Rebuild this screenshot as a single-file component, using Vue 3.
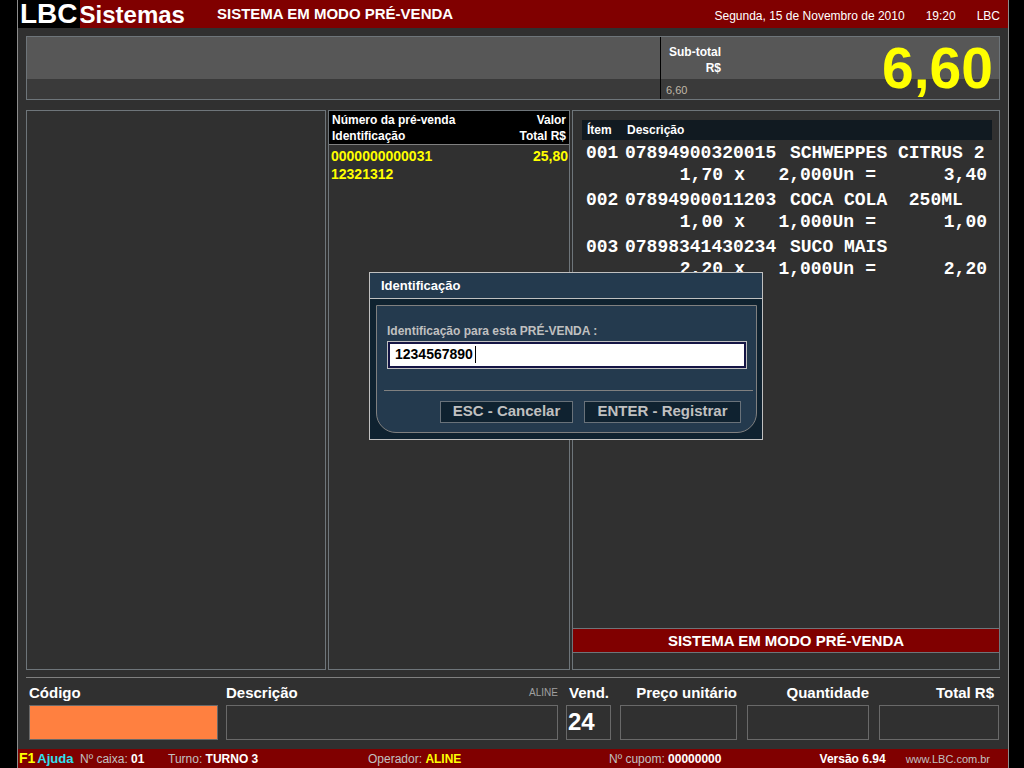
<script setup>
import { ref } from 'vue'

const identification = ref('1234567890')
const seller = ref('24')

const items = [
  { n: '001', code: '07894900320015', name: 'SCHWEPPES CITRUS 2', price: '1,70', qty: '2,000Un', total: '3,40' },
  { n: '002', code: '07894900011203', name: 'COCA COLA  250ML', price: '1,00', qty: '1,000Un', total: '1,00' },
  { n: '003', code: '07898341430234', name: 'SUCO MAIS', price: '2,20', qty: '1,000Un', total: '2,20' },
]
</script>

<template>
  <div class="screen">
    <div class="app">
      <header class="top">
        <div class="brand"><span class="brand-a">LBC</span><span class="brand-b">Sistemas</span></div>
        <h1 class="mode">SISTEMA EM MODO PRÉ-VENDA</h1>
        <div class="when">
          <span>Segunda, 15 de Novembro de 2010</span>
          <span>19:20</span>
          <span>LBC</span>
        </div>
      </header>

      <main class="body">
        <section class="summary">
          <div class="summary-main"></div>
          <div class="summary-total">
            <div class="sub-labels">
              <div class="sub-name">Sub-total<br />R$</div>
              <div class="sub-small">6,60</div>
            </div>
            <div class="sub-value">6,60</div>
          </div>
        </section>

        <section class="work">
          <div class="panel blank"></div>

          <div class="panel">
            <table class="presales">
              <thead>
                <tr>
                  <th>Número da pré-venda<br />Identificação</th>
                  <th class="num">Valor<br />Total R$</th>
                </tr>
              </thead>
              <tbody>
                <tr>
                  <td>0000000000031<br />12321312</td>
                  <td class="num">25,80</td>
                </tr>
              </tbody>
            </table>
          </div>

          <div class="panel coupon">
            <table class="items">
              <thead>
                <tr><th class="c-n">Ítem</th><th>Descrição</th></tr>
              </thead>
              <tbody>
                <tr v-for="it in items" :key="it.n">
                  <td>{{ it.n }}</td>
                  <td>
                    <div class="line"><span class="code">{{ it.code }}</span><span>{{ it.name }}</span></div>
                    <div class="line calc">
                      <span class="price">{{ it.price }}</span><span class="times">x</span>
                      <span class="qty">{{ it.qty }}</span><span class="eq">=</span>
                      <span class="total">{{ it.total }}</span>
                    </div>
                  </td>
                </tr>
              </tbody>
            </table>
            <div class="banner">SISTEMA EM MODO PRÉ-VENDA</div>
          </div>

          <form class="dialog" role="dialog" aria-labelledby="dlg-title" @submit.prevent>
            <h2 id="dlg-title" class="dialog-title">Identificação</h2>
            <div class="dialog-frame">
              <div class="dialog-body">
                <label for="ident" class="dialog-label">Identificação para esta PRÉ-VENDA :</label>
                <div class="entry">
                  <input id="ident" v-model="identification" type="text" />
                  <span class="caret"></span>
                </div>
                <div class="actions">
                  <button type="button">ESC - Cancelar</button>
                  <button type="submit" class="wide">ENTER - Registrar</button>
                </div>
              </div>
            </div>
          </form>
        </section>

        <section class="fields">
          <div class="group left">
            <div class="field">
              <label for="codigo">Código</label>
              <input id="codigo" class="active" type="text" />
            </div>
            <div class="field">
              <div class="label-row"><label for="descricao">Descrição</label><span class="who">ALINE</span></div>
              <input id="descricao" type="text" />
            </div>
            <div class="field vend">
              <label for="vend">Vend.</label>
              <input id="vend" v-model="seller" type="text" />
            </div>
          </div>
          <div class="group right">
            <div class="field"><label for="preco">Preço unitário</label><input id="preco" type="text" /></div>
            <div class="field"><label for="quant">Quantidade</label><input id="quant" type="text" /></div>
            <div class="field last"><label for="total">Total R$</label><input id="total" type="text" /></div>
          </div>
        </section>
      </main>

      <footer class="status">
        <div class="cell help"><b class="f1">F1</b><b class="ajuda">Ajuda</b></div>
        <div class="cell box">Nº caixa: <b>01</b></div>
        <div class="cell shift">Turno: <b>TURNO 3</b></div>
        <div class="cell oper">Operador: <b class="yellow">ALINE</b></div>
        <div class="cell receipt">Nº cupom: <b>00000000</b></div>
        <div class="cell version"><b>Versão 6.94</b></div>
        <a class="site" href="#">www.LBC.com.br</a>
      </footer>
    </div>
  </div>
</template>

<style>
body {
  background: #000;
}
</style>

<style scoped>
* {
  box-sizing: border-box;
}
.screen {
  min-height: 100vh;
  display: flex;
  padding: 0 15px 0 17px;
  background: #000;
  color: #fff;
  font-family: "Liberation Sans", Arial, sans-serif;
  font-size: 12px;
  line-height: 16px;
}
.app {
  flex: 1;
  display: flex;
  flex-direction: column;
  min-width: 0;
  background: #303030;
  border: solid #8c8c8c;
  border-width: 0 1px;
}
.top {
  display: flex;
  align-items: center;
  height: 28px;
  background: #800000;
  padding-right: 8px;
}
.brand {
  display: flex;
  align-items: center;
  width: 199px;
  font-weight: bold;
}
.brand-a {
  background: #000;
  font-size: 28px;
  line-height: 28px;
  padding: 0 2px;
}
.brand-b {
  font-size: 24px;
  line-height: 28px;
  padding-top: 1px;
}
.mode {
  margin: 0;
  font-size: 15px;
  line-height: 28px;
}
.when {
  display: flex;
  gap: 21px;
  margin-left: auto;
  font-size: 12px;
  line-height: 16px;
  padding-top: 3px;
}
.body {
  flex: 1;
  display: flex;
  flex-direction: column;
  padding: 8px 8px 9px;
}
.summary {
  display: flex;
  height: 64px;
  border: 1px solid #6e757a;
  background: linear-gradient(#575757 42px, #3a3a3a 42px);
}
.summary-main {
  flex: 1;
}
.summary-total {
  display: flex;
  justify-content: space-between;
  width: 339px;
  border-left: 1px solid #000;
  padding: 0 6px 0 5px;
}
.sub-labels {
  display: flex;
  flex-direction: column;
  justify-content: space-between;
  padding: 7px 0 1px;
}
.sub-name {
  padding-left: 3px;
  text-align: right;
  font-weight: bold;
}
.sub-small {
  color: #c0b8a8;
  font-size: 11px;
}
.sub-value {
  color: #ff0;
  font-size: 57px;
  font-weight: bold;
  line-height: 62px;
}
.work {
  position: relative;
  flex: 1;
  display: grid;
  grid-template-columns: 300fr 242px 428fr;
  gap: 2px;
  margin-top: 10px;
}
.panel {
  border: 1px solid #6e757a;
}
.presales {
  width: 100%;
  border-collapse: collapse;
}
.presales th {
  background: #000;
  border-bottom: 1px solid #808080;
  padding: 1px 3px 0;
  text-align: left;
  font-size: 12px;
  line-height: 16px;
}
.presales td {
  padding: 2px 1px 0 2px;
  color: #ff0;
  font-size: 14px;
  font-weight: bold;
  line-height: 18px;
  vertical-align: top;
}
.presales .num {
  text-align: right;
}
.coupon {
  display: flex;
  flex-direction: column;
  padding: 9px 0 16px;
}
.items {
  margin: 0 7px 0 9px;
  border-collapse: collapse;
}
.items th {
  background: #111a21;
  padding: 2px 0 2px 5px;
  text-align: left;
  font-size: 12px;
  line-height: 16px;
}
.items .c-n {
  width: 40px;
}
.items td {
  padding: 2px 5px 1px 3px;
  font: bold 18px/22px "Liberation Mono", "Courier New", monospace;
  vertical-align: top;
  white-space: pre;
}
.items td:first-child {
  padding-left: 4px;
  padding-right: 0;
}
.line {
  display: flex;
}
.code {
  width: 165px;
}
.price {
  width: 98px;
  text-align: right;
}
.times {
  width: 22px;
  text-align: right;
}
.qty {
  width: 109px;
  text-align: right;
}
.eq {
  width: 22px;
  text-align: right;
}
.total {
  flex: 1;
  text-align: right;
}
.banner {
  margin-top: auto;
  border: solid #6e757a;
  border-width: 1px 0;
  background: #800000;
  text-align: center;
  font-size: 15px;
  font-weight: bold;
  line-height: 23px;
}
.dialog {
  position: absolute;
  left: 343px;
  top: 162px;
  width: 394px;
  border: 1px solid #c0c0c0;
  background: #0f2230;
}
.dialog-title {
  margin: 0;
  padding: 0 11px;
  background: #243a4e;
  border-bottom: 1px solid #c0c0c0;
  font-size: 13px;
  line-height: 25px;
}
.dialog-frame {
  padding: 6px 5px 6px 6px;
}
.dialog-body {
  padding: 17px 3px 9px 7px;
  background: #243a4e;
  border: 1px solid #808080;
  border-radius: 0 0 20px 20px;
}
.dialog-label {
  display: block;
  margin-left: 3px;
  color: #c0c0c0;
  font-size: 12px;
  font-weight: bold;
  line-height: 16px;
}
.entry {
  display: flex;
  position: relative;
  margin: 2px 6px 0 3px;
  border: 1px solid #c0c0c0;
}
.entry input {
  flex: 1;
  min-width: 0;
  height: 26px;
  padding: 0 5px 2px;
  border: 2px solid #151545;
  border-radius: 0;
  outline: 0;
  background: #fff;
  color: #000;
  font: bold 14px/18px "Liberation Sans", Arial, sans-serif;
}
.caret {
  position: absolute;
  left: 87px;
  top: 4px;
  width: 1px;
  height: 17px;
  background: #000;
}
.actions {
  display: flex;
  justify-content: flex-end;
  gap: 11px;
  margin-top: 21px;
  padding: 10px 12px 0 0;
  border-top: 1px solid #808080;
}
.actions button {
  width: 133px;
  height: 22px;
  padding: 0 0 2px;
  border: 1px solid #69727a;
  border-radius: 0;
  background: #0f2230;
  color: #c0c0c0;
  font: bold 15px/18px "Liberation Sans", Arial, sans-serif;
}
.actions .wide {
  width: 157px;
}
.fields {
  display: grid;
  grid-template-columns: 582fr 379fr;
  gap: 9px;
  margin-top: 7px;
  padding: 6px 1px 0 3px;
  border-top: 1px solid #808080;
}
.group {
  display: grid;
}
.left {
  grid-template-columns: 189fr 332fr 45px;
  gap: 8px;
}
.right {
  grid-template-columns: 117fr 122fr 120fr;
  gap: 10px;
}
.field {
  display: flex;
  flex-direction: column;
  font-size: 15px;
  font-weight: bold;
  line-height: 18px;
}
.right .field {
  text-align: right;
}
.last label {
  padding-right: 5px;
}
.vend label {
  padding-left: 3px;
}
.label-row {
  display: flex;
  justify-content: space-between;
}
.who {
  color: #a0a0a0;
  font-size: 10px;
  font-weight: normal;
}
.field input {
  width: 100%;
  height: 35px;
  margin-top: 3px;
  padding: 0 1px 2px;
  border: 1px solid #696969;
  border-radius: 0;
  outline: 0;
  background: transparent;
  color: #fff;
  font: bold 24px/28px "Liberation Sans", Arial, sans-serif;
}
.field .active {
  background: #ff8040;
}
.status {
  display: flex;
  align-items: center;
  height: 19px;
  padding: 0 18px 0 1px;
  background: #800000;
  color: #c0c0c0;
  font-size: 12px;
  line-height: 18px;
  white-space: nowrap;
}
.status b {
  color: #fff;
}
.help {
  width: 61px;
  font-size: 14px;
}
.help .f1,
.status .yellow {
  color: #ff0;
}
.help .ajuda {
  padding-left: 2px;
  color: #2fe0f0;
  font-size: 13px;
}
.box {
  width: 88px;
}
.shift {
  width: 200px;
}
.oper {
  width: 241px;
}
.version {
  margin-left: auto;
  padding-right: 20px;
}
.site {
  color: #c0c0c0;
  font-size: 11px;
  text-decoration: none;
}
</style>
